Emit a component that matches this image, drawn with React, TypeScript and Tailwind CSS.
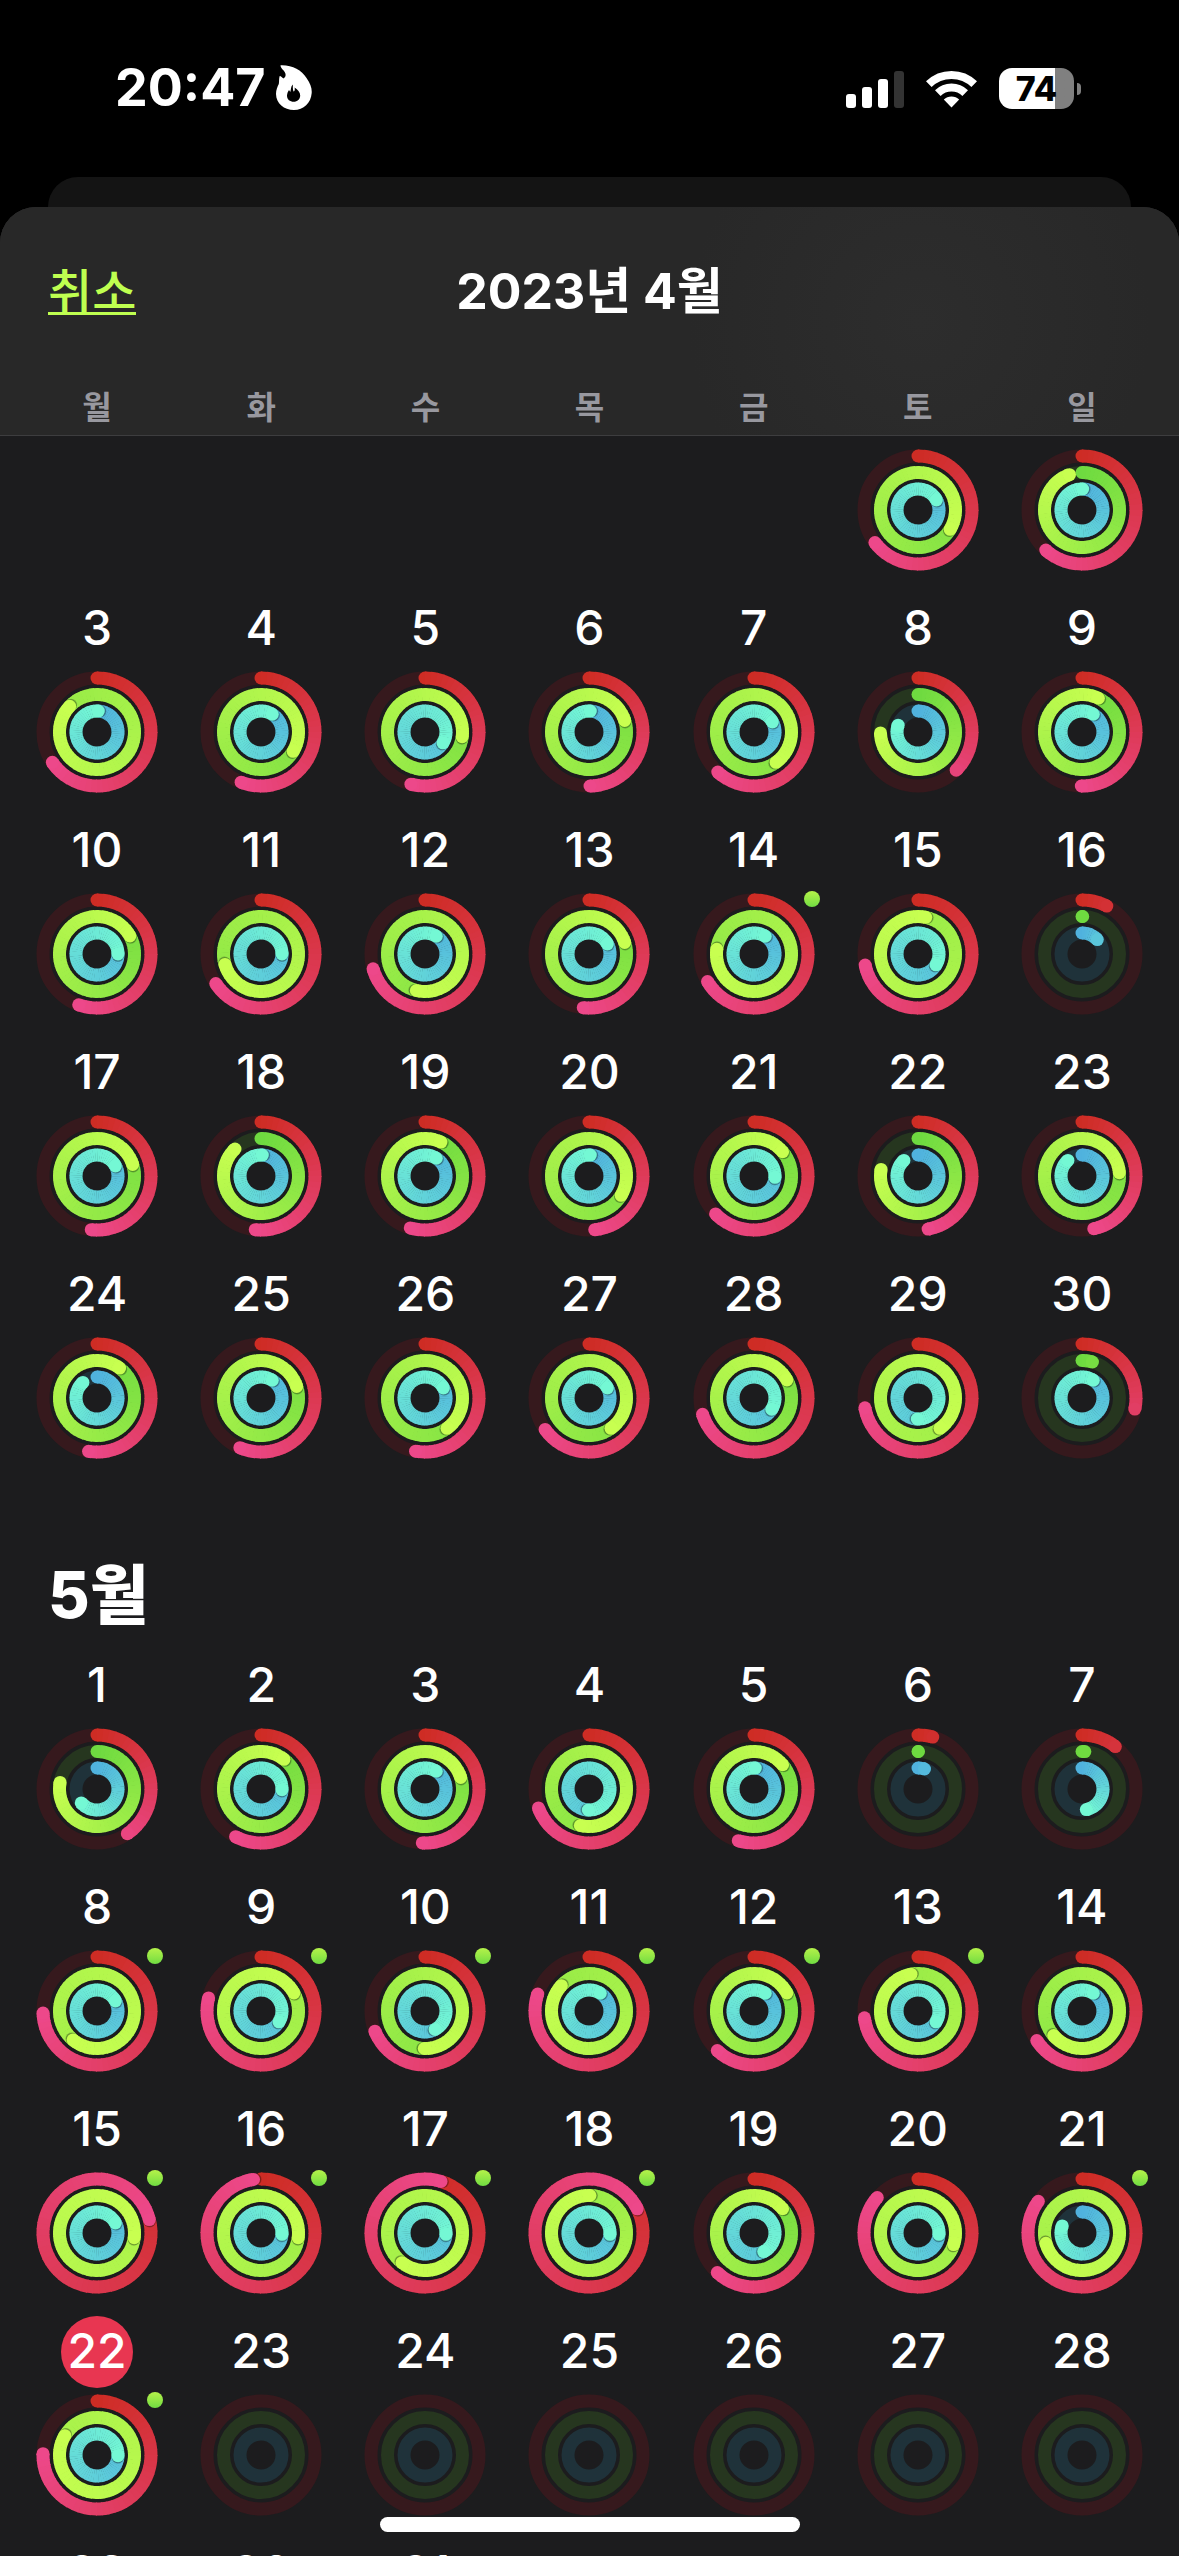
import React from "react";

type Rings = [number, number, number];

type Day = {
  day: number;
  // percent of goal: move, exercise, stand
  rings: Rings;
  workout?: boolean;
};

type Tone = {
  radius: number;
  track: string;
  from: number[];
  to: number[];
};

const WEEKDAYS = ["월", "화", "수", "목", "금", "토", "일"];

const TONES: Tone[] = [
  { radius: 54, track: "#36191d", from: [206, 44, 36], to: [237, 72, 138] },
  { radius: 37.5, track: "#26361f", from: [110, 218, 64], to: [200, 255, 80] },
  { radius: 21, track: "#1f323a", from: [80, 178, 222], to: [116, 248, 212] },
];

const APRIL_FIRST: Day[] = [
  { day: 1, rings: [64.7, 133.6, 117] },
  { day: 2, rings: [61.7, 94.6, 100.5] },
];

const APRIL: Day[] = [
  { day: 3, rings: [65.5, 187, 101] },
  { day: 4, rings: [56, 133.6, 109] },
  { day: 5, rings: [54.2, 127, 133.6] },
  { day: 6, rings: [49.7, 120, 101] },
  { day: 7, rings: [61.7, 140, 117] },
  { day: 8, rings: [37.5, 74.6, 80.3] },
  { day: 9, rings: [50.2, 107.2, 109] },
  { day: 10, rings: [55.5, 117, 125] },
  { day: 11, rings: [65.8, 170.5, 125] },
  { day: 12, rings: [70.6, 153.7, 109] },
  { day: 13, rings: [51.7, 120, 117] },
  { day: 14, rings: [66.5, 177, 109], workout: true },
  { day: 15, rings: [71.7, 203.3, 133.6] },
  { day: 16, rings: [7.6, 0.3, 13] },
  { day: 17, rings: [51.7, 120, 117] },
  { day: 18, rings: [51.7, 87.8, 101] },
  { day: 19, rings: [54.4, 107, 109] },
  { day: 20, rings: [48.3, 133.6, 101] },
  { day: 21, rings: [62.6, 113.8, 126] },
  { day: 22, rings: [47, 77.8, 88.3] },
  { day: 23, rings: [46.5, 123.6, 88.3] },
  { day: 24, rings: [52.5, 110.3, 88.3] },
  { day: 25, rings: [56.4, 120, 109] },
  { day: 26, rings: [52.8, 140, 117] },
  { day: 27, rings: [65.1, 140, 117] },
  { day: 28, rings: [70.1, 117, 134] },
  { day: 29, rings: [72.1, 240, 150.5] },
  { day: 30, rings: [28.3, 4.5, 109] },
];

const MAY: Day[] = [
  { day: 1, rings: [40.5, 77.8, 63.5] },
  { day: 2, rings: [57.8, 110.5, 125.5] },
  { day: 3, rings: [50.8, 120, 109] },
  { day: 4, rings: [69.3, 153.7, 150.5] },
  { day: 5, rings: [54.7, 113.8, 101] },
  { day: 6, rings: [4.4, 0.2, 5] },
  { day: 7, rings: [10.6, 1.2, 46.7] },
  { day: 8, rings: [74.4, 261, 117], workout: true },
  { day: 9, rings: [78.9, 217, 133.6], workout: true },
  { day: 10, rings: [68.9, 150.3, 142], workout: true },
  { day: 11, rings: [80.1, 186.8, 109], workout: true },
  { day: 12, rings: [61.9, 117, 109], workout: true },
  { day: 13, rings: [73, 197, 133.6], workout: true },
  { day: 14, rings: [65.8, 163.6, 109] },
  { day: 15, rings: [121, 327, 117], workout: true },
  { day: 16, rings: [97.8, 227, 126], workout: true },
  { day: 17, rings: [104.8, 260.5, 126], workout: true },
  { day: 18, rings: [117.6, 200.4, 126], workout: true },
  { day: 19, rings: [61.9, 113.8, 142.3] },
  { day: 20, rings: [86.4, 230, 126] },
  { day: 21, rings: [85, 270.6, 80.5], workout: true },
  { day: 22, rings: [75.4, 283.6, 125.5], workout: true },
  { day: 23, rings: [0, 0, 0] },
  { day: 24, rings: [0, 0, 0] },
  { day: 25, rings: [0, 0, 0] },
  { day: 26, rings: [0, 0, 0] },
  { day: 27, rings: [0, 0, 0] },
  { day: 28, rings: [0, 0, 0] },
  { day: 29, rings: [0, 0, 0] },
  { day: 30, rings: [0, 0, 0] },
  { day: 31, rings: [0, 0, 0] },
];

const TODAY = 22;

const point = (radius: number, deg: number) => {
  const rad = ((deg - 90) * Math.PI) / 180;
  return [radius * Math.cos(rad), radius * Math.sin(rad)];
};

const mix = (tone: Tone, t: number) => {
  const [r, g, b] = tone.from.map((c, i) => Math.round(c + (tone.to[i] - c) * t));
  return `rgb(${r} ${g} ${b})`;
};

const Ring = ({ tone, percent }: { tone: Tone; percent: number }) => {
  const end = percent * 3.6;
  // only the last lap is visible, the earlier ones lie under it
  const start = Math.max(0, end - 360);
  const count = Math.ceil((end - start) / 6);
  // short arcs never reach the end colour
  const reach = Math.min(1, percent / 45);
  const [sx, sy] = point(tone.radius, 0);
  const [ex, ey] = point(tone.radius, end);
  const shade = point(tone.radius, end + 120 / tone.radius);

  return (
    <g>
      <circle r={tone.radius} fill="none" stroke={tone.track} strokeWidth={13} />
      {percent > 0 && start === 0 && <circle cx={sx} cy={sy} r={6.5} fill={mix(tone, 0)} />}
      {Array.from({ length: count }, (_, i) => {
        const a = start + i * 6;
        const b = Math.min(end, a + 7);
        const [x1, y1] = point(tone.radius, a);
        const [x2, y2] = point(tone.radius, b);
        return (
          <path
            key={i}
            d={`M${x1} ${y1}A${tone.radius} ${tone.radius} 0 0 1 ${x2} ${y2}`}
            fill="none"
            stroke={mix(tone, (reach * (a + b)) / 2 / end)}
            strokeWidth={13}
          />
        );
      })}
      {percent > 96 && (
        <>
          <circle cx={shade[0]} cy={shade[1]} r={6} fill="#000" opacity={0.2} />
          <circle cx={(shade[0] + ex) / 2} cy={(shade[1] + ey) / 2} r={6.5} fill="#000" opacity={0.2} />
        </>
      )}
      {percent > 0 && <circle cx={ex} cy={ey} r={6.5} fill={mix(tone, reach)} />}
    </g>
  );
};

const ActivityRings = ({ rings }: { rings: Rings }) => (
  <svg viewBox="-61 -61 122 122" className="block size-[122px]" aria-hidden="true">
    {TONES.map((tone, i) => (
      <Ring key={tone.radius} tone={tone} percent={rings[i]} />
    ))}
  </svg>
);

const DayCell = ({ item, today, hideLabel }: { item: Day; today?: boolean; hideLabel?: boolean }) => (
  <button type="button" aria-label={`${item.day}일`} className="flex flex-col items-center pb-[22px]">
    {!hideLabel && (
      <span
        className={
          today
            ? "flex justify-center size-[72px] mb-[6px] rounded-full bg-[#e83651] text-[48px] leading-[70px] font-medium"
            : "flex justify-center size-[72px] mb-[6px] text-[48px] leading-[70px] font-medium"
        }
      >
        {item.day}
      </span>
    )}
    <span className="relative block">
      <ActivityRings rings={item.rings} />
      {item.workout && (
        <span className="absolute -top-[2px] -right-[5px] size-4 rounded-full bg-linear-to-b from-[#b4f24a] to-[#6fdc42]" />
      )}
    </span>
  </button>
);

const StatusBar = () => (
  <div className="flex justify-between items-center h-[177px] shrink-0 pl-[115px] pr-[98px]">
    <div className="flex items-center gap-[10px] pb-[2px]">
      <span className="text-[52px] leading-[60px] font-bold">20:47</span>
      <svg viewBox="0 0 36 45" className="w-9 h-[45px]" fill="#fff" fillRule="evenodd" aria-hidden="true">
        <path d="M4.500.3C16-.2 25.500 5 30.500 13C34.500 19 36 23 35.700 28C35 38 27.500 45 18 45C8 45 .2 38.500 0 29C0 25 1.500 21.500 2.800 19C3.300 16.500 2.800 13.500 3.700 11C5 11.300 6.300 12.300 7.300 13.600C9.500 12.500 10 10.500 9.300 8.300C8.500 5.500 4.500 3.500 4.500.3ZM16.800 19.600C17 22 16.500 24 17.500 26.500C18.800 26 19 24.500 18.600 22.500C22 24.500 24.200 27.500 24.200 30.500C24.200 34.300 21.300 36.800 17.700 36.800C14 36.800 11 34.500 11 30.800C11 28.500 12 26.500 13 25L14.300 27C15.200 24.500 14.500 22 16.800 19.600Z" />
      </svg>
    </div>
    <div className="flex items-center gap-[22px]">
      <svg viewBox="0 0 58 38" className="w-[58px] h-[38px]" fill="#fff" aria-hidden="true">
        <rect x="0" y="24" width="10" height="14" rx="3" />
        <rect x="16" y="17" width="10" height="21" rx="3" />
        <rect x="32" y="9" width="10" height="29" rx="3" />
        <rect x="48" y="1" width="10" height="37" rx="3" fill="#333" />
      </svg>
      <svg viewBox="0 0 51 38" className="w-[51px] h-[38px]" aria-hidden="true">
        <g fill="none" stroke="#fff" strokeWidth="8">
          <path d="M2.800 14.200A32.500 32.500 0 0 1 48.200 14.200" />
          <path d="M11.800 23.200A19.600 19.600 0 0 1 39.200 23.200" />
        </g>
        <path fill="#fff" d="M17.800 29.600A11 11 0 0 1 33.200 29.600L25.500 37.600Z" />
      </svg>
      <div className="flex items-center gap-[3px]">
        <div className="flex justify-center items-center w-[75px] h-[41px] rounded-[13px] bg-linear-to-r from-white from-75% to-[#808080] to-75%">
          <span className="text-[34px] leading-[40px] font-extrabold text-black">74</span>
        </div>
        <div className="w-1 h-3 rounded-r-full bg-[#808080]" />
      </div>
    </div>
  </div>
);

export default function App() {
  return (
    <div className="relative flex flex-col h-screen overflow-hidden bg-black text-white select-none font-['Inter','Noto_Sans_CJK_KR',sans-serif]">
      <StatusBar />
      {/* sheet behind */}
      <div className="h-[30px] shrink-0 mx-12 rounded-t-[30px] bg-[#141414]" />

      <div className="flex flex-col flex-1 min-h-0 rounded-t-[36px] overflow-hidden bg-[#1c1c1e]">
        <header className="shrink-0 border-b border-[#3d3d3f] bg-[#282828] bg-radial-[circle_at_78%_50%] from-[#2d2d2d] to-[#282828] to-25%">
          <div className="grid grid-cols-3 items-center h-[168px] px-12">
            <a href="#" className="justify-self-start pt-1 border-b-3 border-[#bfff50] text-[48px] leading-[40px] font-medium text-[#bfff50]">
              취소
            </a>
            <h1 className="justify-self-center whitespace-nowrap text-[50px] leading-[60px] font-bold">2023년 4월</h1>
          </div>
          <div className="grid grid-cols-7 h-[60px] px-[15px] text-center text-[32px] leading-[66px] font-semibold text-[#98989f]">
            {WEEKDAYS.map((name) => (
              <span key={name}>{name}</span>
            ))}
          </div>
        </header>

        <main className="flex-1 min-h-0 overflow-hidden px-[15px] pt-[13px]">
          <div className="grid grid-cols-7">
            <div className="col-span-5" />
            {APRIL_FIRST.map((item) => (
              <DayCell key={item.day} item={item} hideLabel />
            ))}
          </div>
          <div className="grid grid-cols-7">
            {APRIL.map((item) => (
              <DayCell key={item.day} item={item} />
            ))}
          </div>
          <h2 className="h-[169px] pl-[33px] pt-[69px] text-[64px] leading-[90px] font-extrabold">5월</h2>
          <div className="grid grid-cols-7">
            {MAY.map((item) => (
              <DayCell key={item.day} item={item} today={item.day === TODAY} />
            ))}
          </div>
        </main>
      </div>

      {/* home indicator */}
      <div className="absolute bottom-6 left-1/2 w-[420px] h-[15px] -translate-x-1/2 rounded-full bg-white" />
    </div>
  );
}
